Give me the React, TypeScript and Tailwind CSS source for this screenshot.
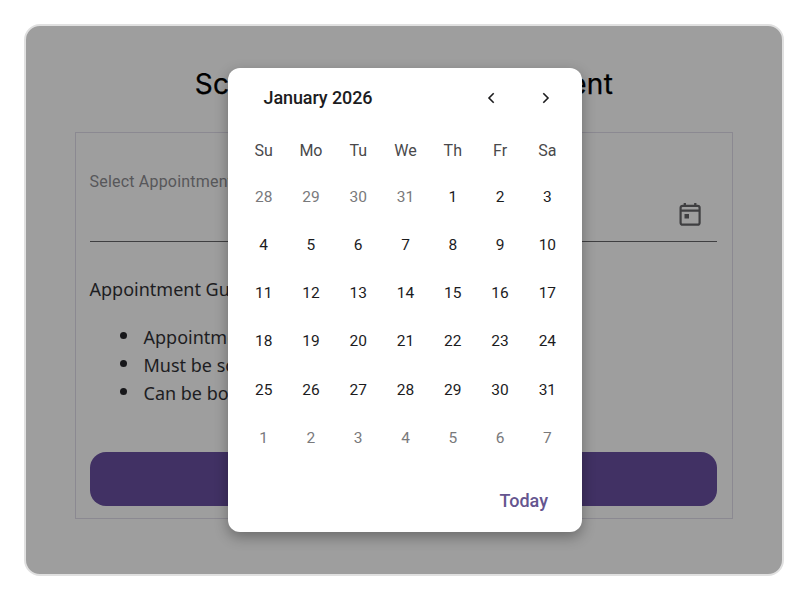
import React from 'react';

const weekdays = ['Su', 'Mo', 'Tu', 'We', 'Th', 'Fr', 'Sa'];

// January 2026 with the trailing and leading days of its neighbours
const days = Array.from({ length: 42 }, (_, i) => {
  if (i < 4) return { day: 28 + i, outside: true };
  if (i < 35) return { day: i - 3, outside: false };
  return { day: i - 34, outside: true };
});

const guidelines = [
  'Appointments available on weekdays',
  'Must be scheduled in advance',
  'Can be booked up to 30 days ahead',
];

const CalendarIcon: React.FC = () => (
  <svg className="w-6 h-6" viewBox="0 0 24 24" fill="none" stroke="#3f3f41" strokeWidth="2.2">
    <rect x="2.6" y="3.8" width="19" height="18.9" rx="2" />
    <path d="M2.5 8.7h19M6.8 1v3M17.3 1v3" strokeWidth="2.3" />
    <rect x="6.5" y="12" width="4.5" height="4.5" fill="#3f3f41" stroke="none" />
  </svg>
);

const AppointmentForm: React.FC = () => (
  <div className="w-[658px] h-[387px] ml-[49px] border border-[#8b8991] pl-[13.5px] pr-[15px] pt-[38px]">
    <label className="block h-5 pt-px leading-5 text-[16px] tracking-[0.2px] text-[#57575a] whitespace-nowrap">
      Select Appointment Date
    </label>
    <div className="h-[51px] border-b border-[#3f3f41] flex items-start justify-end pr-[15px] pt-[11px]">
      <CalendarIcon />
    </div>
    <div className="font-['Noto_Sans',sans-serif] text-[18px] text-[#1d1d22] whitespace-nowrap">
      <p className="mt-[33px] leading-7">Appointment Guidelines:</p>
      <ul className="mt-[20px] pl-[54px] list-none">
        {guidelines.map((item) => (
          <li key={item} className="leading-7 flex items-center">
            <span className="w-[7px] h-[7px] -mt-[3px] -ml-[24px] mr-[17px] rounded-full bg-[#17171a]" />
            {item}
          </li>
        ))}
      </ul>
    </div>
    <button className="block w-full h-[54px] mt-[45px] rounded-[16px] bg-[#413164]" aria-label="Submit" />
  </div>
);

const DatePicker: React.FC = () => (
  <div className="absolute left-[202px] top-[42px] w-[354px] h-[464px] rounded-[12px] bg-white shadow-[0_5px_14px_rgba(0,0,0,0.32)] pl-[12px] pr-[11px]">
    <div className="h-[60px] flex items-center pl-[23.5px] pr-[21px]">
      <h2 className="flex-1 -mt-px text-[18px] tracking-[-0.1px] font-medium text-[#1c1c1e]">January 2026</h2>
      <button className="mr-[45px]" aria-label="Previous month">
        <svg className="w-[9px] h-3" viewBox="0 0 9 12" fill="none" stroke="#1c1c1e" strokeWidth="1.6">
          <path d="M6.7 1.3L2 6l4.7 4.7" />
        </svg>
      </button>
      <button aria-label="Next month">
        <svg className="w-[9px] h-3" viewBox="0 0 9 12" fill="none" stroke="#1c1c1e" strokeWidth="1.6">
          <path d="M2.3 1.3L7 6l-4.7 4.7" />
        </svg>
      </button>
    </div>
    <div className="grid grid-cols-7 text-center text-[16px] text-[#49494b]">
      {weekdays.map((name) => (
        <span key={name} className="h-[45px] leading-[45px]">{name}</span>
      ))}
    </div>
    <div className="grid grid-cols-7 text-center text-[15.5px]">
      {days.map(({ day, outside }, i) => (
        <span
          key={i}
          className={outside ? 'h-[48.15px] leading-6 pt-3 text-[#79797b]' : 'h-[48.15px] leading-6 pt-3 text-[#1c1c1e]'}
        >
          {day}
        </span>
      ))}
    </div>
    <div className="flex justify-end pr-[23px] mt-[25px]">
      <button className="text-[18px] leading-7 font-medium text-[#65558f]">Today</button>
    </div>
  </div>
);

export default function App() {
  return (
    <main className="w-[808px] h-[600px] p-6 bg-white font-[Roboto,sans-serif]">
      <div className="relative h-full rounded-[16px] border-2 border-[#e0e0e0] bg-[#9e9e9e] overflow-hidden">
        <h1 className="h-[106px] pt-[38px] text-center font-[Inter,sans-serif] text-[28px] leading-10 tracking-[0.34px] [-webkit-text-stroke:0.25px_black] text-black">
          Schedule Service Appointment
        </h1>
        <AppointmentForm />
        <DatePicker />
      </div>
    </main>
  );
}
